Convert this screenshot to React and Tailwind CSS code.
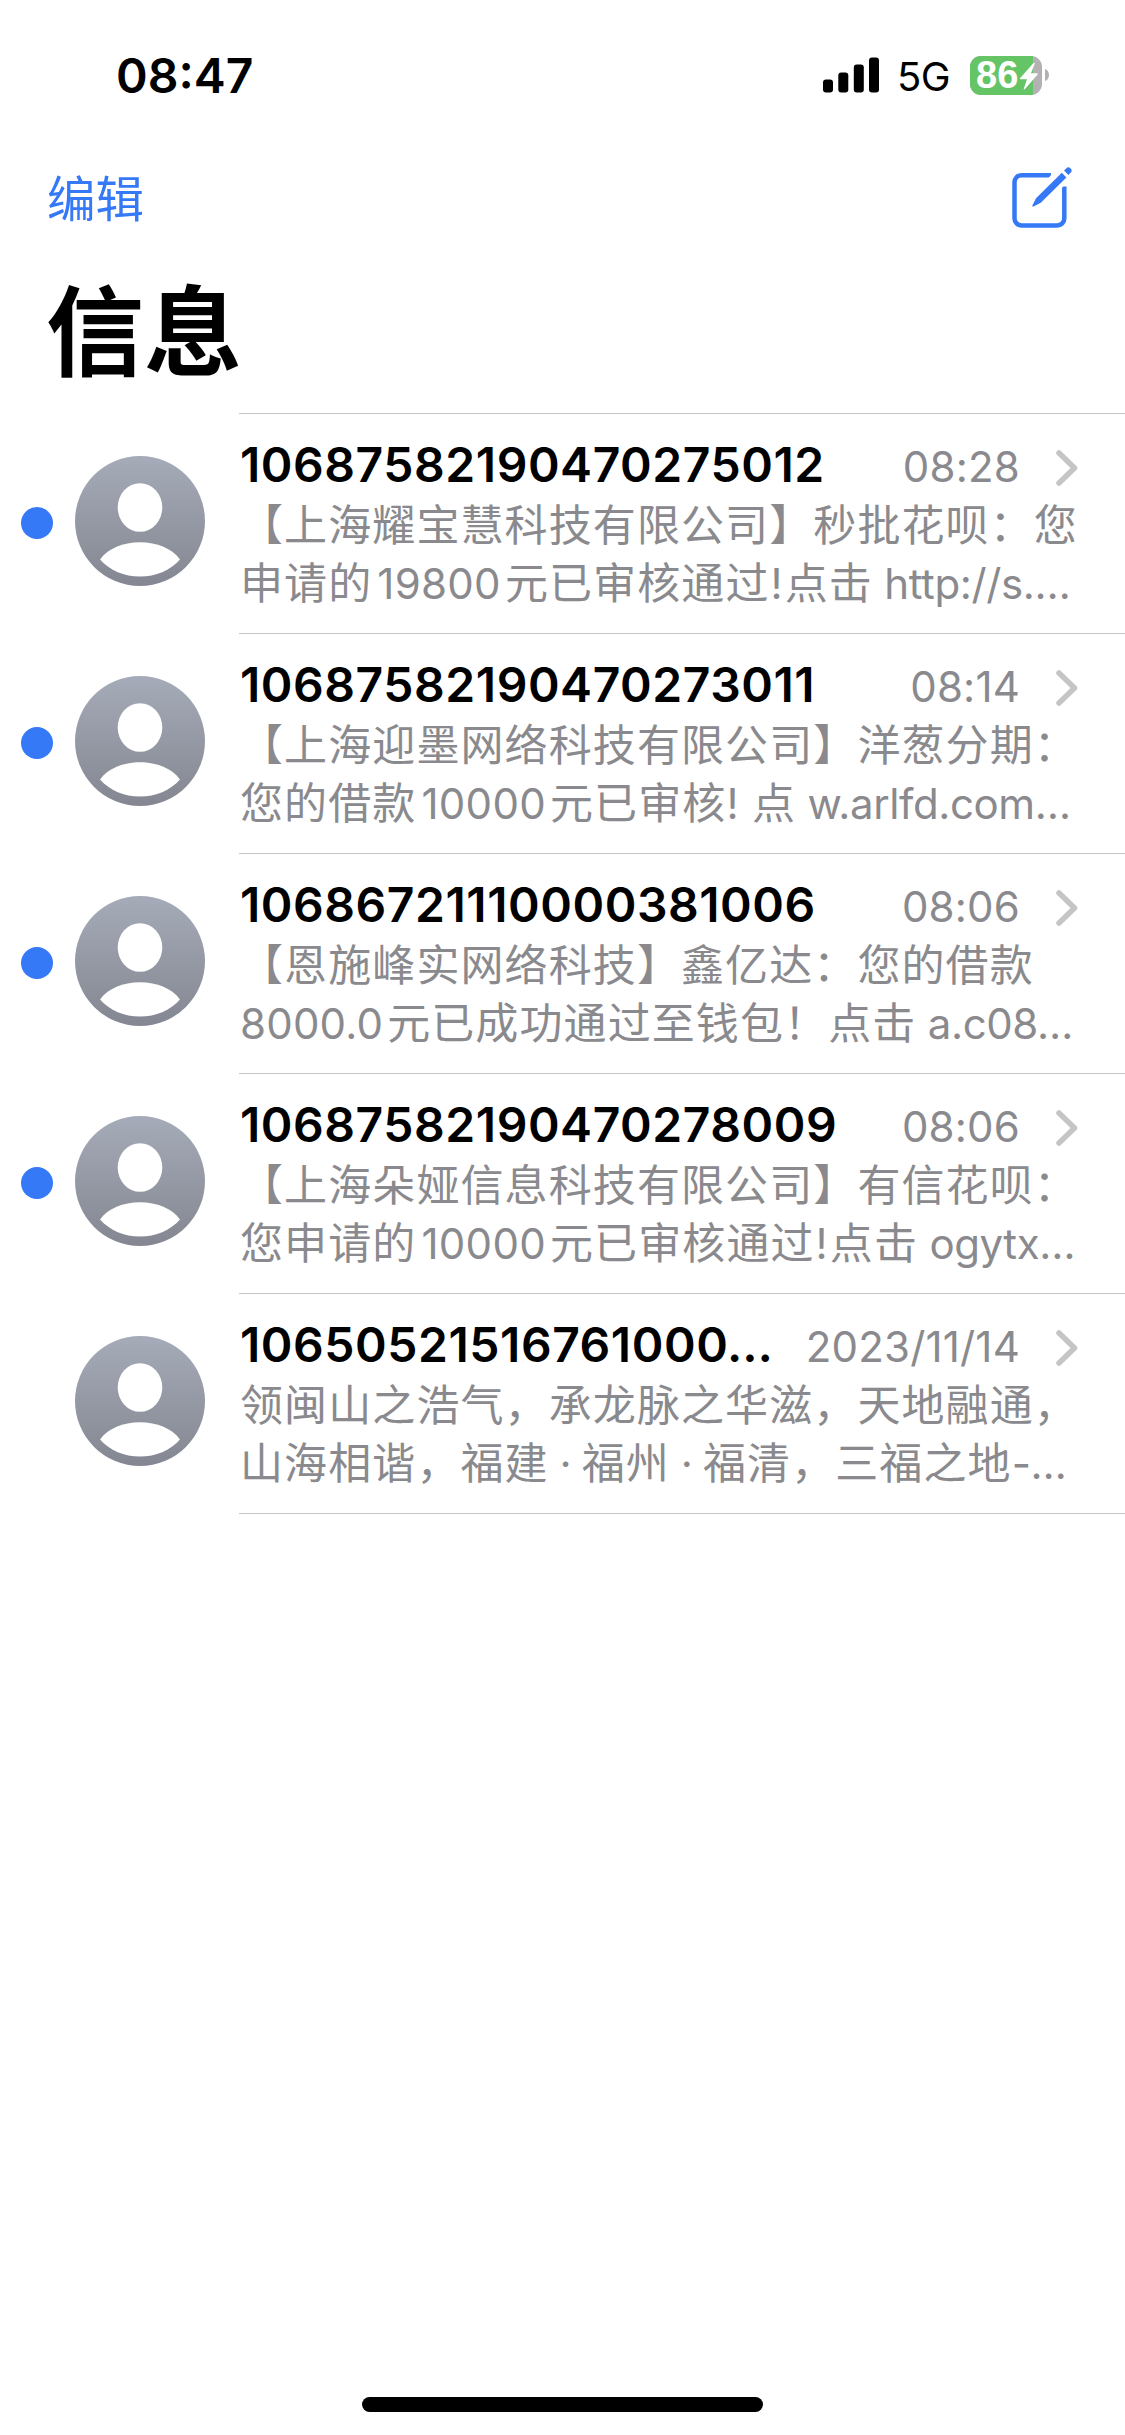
import React from 'react';

const messages = [
    {
        id: 1,
        sender: '10687582190470275012',
        time: '08:28',
        unread: true,
        lines: ['【上海耀宝慧科技有限公司】秒批花呗：您', '申请的19800元已审核通过!点击 http://s.…'],
    },
    {
        id: 2,
        sender: '10687582190470273011',
        time: '08:14',
        unread: true,
        lines: ['【上海迎墨网络科技有限公司】洋葱分期：', '您的借款10000元已审核! 点 w.arlfd.com…'],
    },
    {
        id: 3,
        sender: '10686721110000381006',
        time: '08:06',
        unread: true,
        lines: ['【恩施峰实网络科技】鑫亿达：您的借款', '8000.0元已成功通过至钱包！点击 a.c08…'],
    },
    {
        id: 4,
        sender: '10687582190470278009',
        time: '08:06',
        unread: true,
        lines: ['【上海朵娅信息科技有限公司】有信花呗：', '您申请的10000元已审核通过!点击 ogytx…'],
    },
    {
        id: 5,
        sender: '10650521516761000…',
        time: '2023/11/14',
        unread: false,
        lines: ['领闽山之浩气，承龙脉之华滋，天地融通，', '山海相谐，福建 · 福州 · 福清，三福之地-…'],
    },
];

function StatusBar() {
    return (
        <div className="flex h-[150px] items-center justify-between pl-[116px] pr-[76px]">
            <span className="pt-px text-[48px] font-semibold leading-none">08:47</span>
            <div className="flex items-center">
                <svg width="56" height="36" viewBox="0 0 56 36">
                    <rect x="0" y="22.5" width="10" height="13" rx="3" />
                    <rect x="15.3" y="15.5" width="10" height="20" rx="3" />
                    <rect x="30.8" y="7.5" width="10" height="28" rx="3" />
                    <rect x="46" y="0.5" width="10" height="35" rx="3" />
                </svg>
                <span className="ml-[18px] w-[73px] pt-[3px] text-[40px] leading-none tracking-[-0.5px]">5G</span>
                <div className="relative flex h-[39px] w-[72px] items-center rounded-[11px] bg-[#b3b1b3] pl-[6px]">
                    <div className="absolute inset-y-0 left-0 w-[63px] rounded-l-[11px] bg-[#65c466]" />
                    <span className="relative font-['Liberation_Sans',sans-serif] text-[38px] font-bold leading-[38px] text-white">86</span>
                    <svg className="absolute left-[49px] top-[6px]" width="19" height="28" viewBox="0 0 19 28" fill="#fff">
                        <path d="M14.5 1 1 16.2c-.4.5 0 1.1.5 1.1H8L4.8 26.4c-.3 1 .6 1.4 1.2.7L18.6 12.4c.4-.5 0-1.1-.5-1.1H12L15.7 1.8C16 .8 15.1.4 14.5 1z" />
                    </svg>
                </div>
                <svg className="ml-[3px]" width="4" height="12" viewBox="0 0 4 12" fill="#b3b1b3">
                    <path d="M0 0c2.5.8 4 3 4 6s-1.5 5.2-4 6z" />
                </svg>
            </div>
        </div>
    );
}

function ComposeIcon() {
    return (
        <svg className="mb-[3px]" width="64" height="64" viewBox="0 0 64 64" fill="none">
            <path d="M41 9.2H11.5a7 7 0 0 0-7 7V52.5a7 7 0 0 0 7 7H47.3a7 7 0 0 0 7-7V20.5" stroke="#3579f7" strokeWidth="4.5" />
            <path d="M36 15 44 5.5 60 13 50 24z" fill="#fff" />
            <path d="M51.8 6.8 56.4 11.4 30.8 36.8 23.5 40.6c-.7.4-1.5-.4-1.1-1.1L26 32.2z" fill="#3579f7" />
            <path d="M54 4.6 56.2 2.4a3.1 3.1 0 0 1 4.4 4.4L58.4 9z" fill="#3579f7" />
        </svg>
    );
}

function Avatar() {
    return (
        <svg width="130" height="130" viewBox="0 0 130 130">
            <defs>
                <linearGradient id="avatar" x1="0" y1="0" x2="0" y2="1">
                    <stop offset="0" stopColor="#a5abb8" />
                    <stop offset="1" stopColor="#848791" />
                </linearGradient>
            </defs>
            <circle cx="65" cy="65" r="65" fill="url(#avatar)" />
            <ellipse cx="65" cy="51.5" rx="22.3" ry="24.3" fill="#fff" />
            <path d="M25 103.5C33 92.5 48 86.3 65 86.3s32 6.2 40 17.2C95 114.5 81 120.5 65 120.5S35 114.5 25 103.5z" fill="#fff" />
        </svg>
    );
}

function latinStyle(part) {
    if (/^\d+$/.test(part)) return 'pl-[5px] pr-[4px] text-[42px] tracking-[0.3px]';
    if (/^[\d.]+$/.test(part)) return 'pr-[4px] text-[42px] tracking-[0.2px]';
    if (part.includes('·')) return 'text-[42px] tracking-[-0.9px]';
    if (part === '! ') return 'text-[42px] tracking-[0.8px]';
    if (part === '!') return 'px-px text-[42px]';
    return 'text-[42px] tracking-[-0.4px]';
}

// Latin runs are a touch smaller than the Chinese text around them
function PreviewLine({ text }) {
    const parts = text.split(/([\x20-\x7e·…]+)/).filter(Boolean);
    return (
        <p className="h-[58px] whitespace-pre text-[43px] leading-[58px] tracking-[1.1px]">
            {parts.map((part, i) => (
                <span key={i} className={/^[\x20-\x7e·…]/.test(part) ? latinStyle(part) : ''}>{part}</span>
            ))}
        </p>
    );
}

function MessageRow({ item }) {
    return (
        <div className="flex h-[220px]">
            <div className="flex w-[239px] shrink-0 items-center pl-[21px]">
                <div className={item.unread ? 'mb-[2px] size-8 rounded-full bg-[#3579f7]' : 'size-8'} />
                <div className="mb-[6px] ml-[22px]">
                    <Avatar />
                </div>
            </div>
            <div className="min-w-0 flex-1 border-b border-[#c4c4c6] pl-px pt-[21px]">
                <div className="flex h-[60px] items-center pr-[47px]">
                    <span className="whitespace-nowrap text-[48px] font-semibold leading-[58px] tracking-[0.55px]">{item.sender}</span>
                    <span className="ml-auto whitespace-nowrap pt-[3px] text-[42px] tracking-[0.2px] text-[#8a8a8e]">{item.time}</span>
                    <svg className="ml-[36px] mt-[5px] shrink-0" width="22" height="36" viewBox="0 0 22 36" fill="none">
                        <path d="M3 3 18.5 18 3 33" stroke="#c5c5c7" strokeWidth="5.5" strokeLinecap="round" strokeLinejoin="round" />
                    </svg>
                </div>
                <div className="pt-px text-[#8a8a8e]">
                    {item.lines.map((line) => (
                        <PreviewLine key={line} text={line} />
                    ))}
                </div>
            </div>
        </div>
    );
}

export default function App() {
    return (
        <div className="flex h-[2435px] w-[1125px] flex-col overflow-hidden bg-white font-['Inter','Noto_Sans_CJK_SC',sans-serif] text-black">
            <StatusBar />
            <div className="flex h-[98px] items-center justify-between pl-[47px] pr-[51px]">
                <button className="pt-[2px] text-[48.5px] leading-none text-[#3579f7]">编辑</button>
                <ComposeIcon />
            </div>
            <h1 className="h-[165px] pl-[46px] pt-[29px] text-[98px] font-bold leading-[112px]">信息</h1>
            <div className="ml-[239px] h-px shrink-0 bg-[#c4c4c6]" />
            {messages.map((item) => (
                <MessageRow key={item.id} item={item} />
            ))}
            <div className="mx-auto mb-[23px] mt-auto h-[15px] w-[401px] rounded-full bg-black" />
        </div>
    );
}
